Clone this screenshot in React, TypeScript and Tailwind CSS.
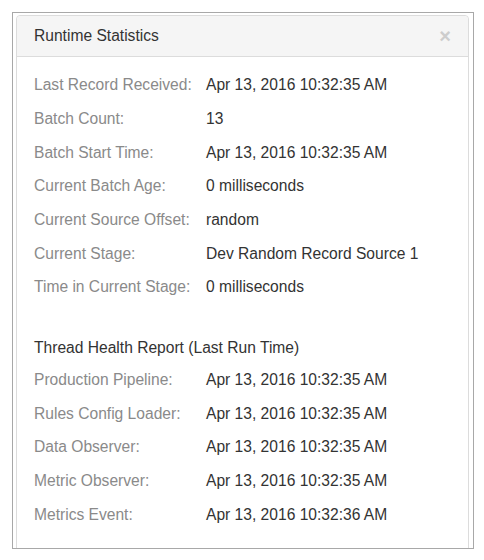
import React from "react"

const runtime: [string, string][] = [
  ["Last Record Received:", "Apr 13, 2016 10:32:35 AM"],
  ["Batch Count:", "13"],
  ["Batch Start Time:", "Apr 13, 2016 10:32:35 AM"],
  ["Current Batch Age:", "0 milliseconds"],
  ["Current Source Offset:", "random"],
  ["Current Stage:", "Dev Random Record Source 1"],
  ["Time in Current Stage:", "0 milliseconds"],
]

const threads: [string, string][] = [
  ["Production Pipeline:", "Apr 13, 2016 10:32:35 AM"],
  ["Rules Config Loader:", "Apr 13, 2016 10:32:35 AM"],
  ["Data Observer:", "Apr 13, 2016 10:32:35 AM"],
  ["Metric Observer:", "Apr 13, 2016 10:32:35 AM"],
  ["Metrics Event:", "Apr 13, 2016 10:32:36 AM"],
]

function Row({ label, value }: { label: string; value: string }) {
  return (
    <div className="flex h-[33.7px] items-center">
      <span className="w-[172px] shrink-0 text-[#8a8a8a]">{label}</span>
      <span className="text-[#333]">{value}</span>
    </div>
  )
}

export default function App() {
  return (
    <div className="h-[560px] w-[484px] bg-white pl-[12px] pt-[12px] font-['Liberation_Sans',Arial,sans-serif] text-[15.6px]">
      {/* Outer frame */}
      <div className="h-[537px] w-[462px] overflow-hidden border border-[#a8a8a8] pl-[3px] pr-[4px] pt-[2px]">
        {/* Panel */}
        <div className="h-[600px] rounded-t-[4px] border border-[#dcdcdc]">
          {/* Header */}
          <div className="flex h-[41px] items-center justify-between rounded-t-[4px] border-b border-[#dcdcdc] bg-[#f5f5f5] pl-[17px] pr-[17px]">
            <span className="text-[#333]">Runtime Statistics</span>
            <span className="text-[20px] font-bold leading-none text-[#cdcdcd]">×</span>
          </div>

          {/* Body */}
          <div className="pl-[17px] pt-[11px]">
            {runtime.map(([l, v]) => (
              <Row key={l} label={l} value={v} />
            ))}

            <div className="mt-[28px] flex h-[31px] items-center text-[#333]">
              Thread Health Report (Last Run Time)
            </div>
            {threads.map(([l, v]) => (
              <Row key={l} label={l} value={v} />
            ))}
          </div>
        </div>
      </div>
    </div>
  )
}
